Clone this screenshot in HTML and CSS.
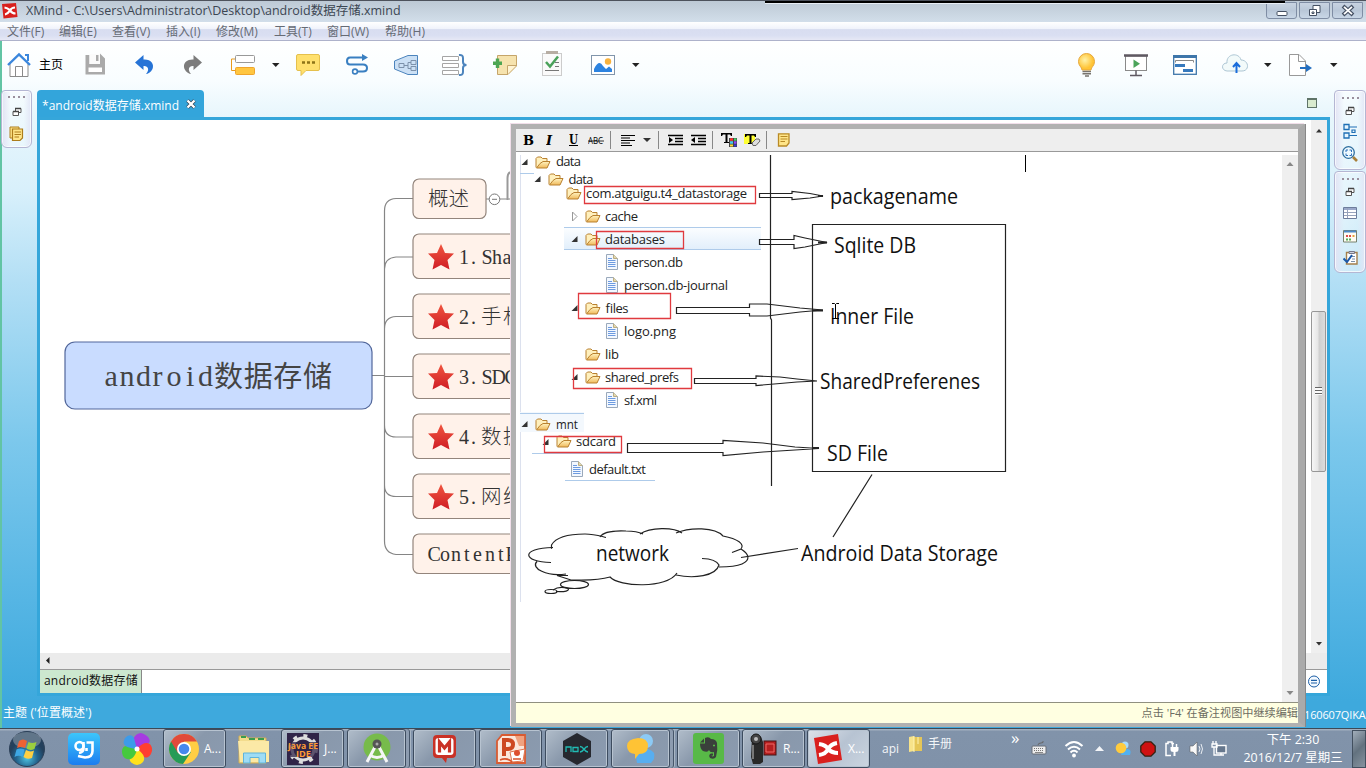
FILE: index.html
```html
<!DOCTYPE html>
<html lang="zh-CN">
<head>
<meta charset="utf-8">
<title>XMind</title>
<link rel="stylesheet" href="styles.css">
</head>
<body>
<svg class="defs" width="0" height="0">
  <defs>
    <linearGradient id="gStar" x1="0" y1="0" x2="0" y2="1"><stop offset="0" stop-color="#f0563f"/><stop offset="1" stop-color="#cf1d26"/></linearGradient>
    <linearGradient id="gFold" x1="0" y1="0" x2="0" y2="1"><stop offset="0" stop-color="#fff3c0"/><stop offset="1" stop-color="#f0b95a"/></linearGradient>
    <linearGradient id="gRow" x1="0" y1="0" x2="0" y2="1"><stop offset="0" stop-color="#fbfdff"/><stop offset="1" stop-color="#e2effb"/></linearGradient>
    <radialGradient id="gBulb" cx=".4" cy=".4"><stop offset="0" stop-color="#fff2a8"/><stop offset="1" stop-color="#ffc436"/></radialGradient>
    <radialGradient id="gOrb" cx=".5" cy=".75"><stop offset="0" stop-color="#4fc6e4"/><stop offset=".6" stop-color="#24658f"/><stop offset="1" stop-color="#23405c"/></radialGradient>
    <linearGradient id="gBlue" x1="0" y1="0" x2="0" y2="1"><stop offset="0" stop-color="#3cc6fb"/><stop offset="1" stop-color="#1c7df0"/></linearGradient>
    <symbol id="star" viewBox="-14 -14 28 28"><path d="M0-13 4-4 13-3.500 6.500 3 8.500 12.500 0 8-8.500 12.500-6.500 3-13-3.500-4-4Z" fill="url(#gStar)"/></symbol>
    <symbol id="folder" viewBox="0 0 16 13"><path d="M1 11.500V2.500L2.500 1H6L7.500 2.500H12V5" fill="#fff0bd" stroke="#b98130"/><path d="M1.500 12 5 7.500 8 5.500H15L12 12Z" fill="url(#gFold)" stroke="#b98130"/></symbol>
    <symbol id="doc" viewBox="0 0 12 16"><path d="M.5.5H7.500L11.500 4.500V15.500H.5Z" fill="#f3f8ff" stroke="#9aa9bb"/><path d="M7.500.5V4.500H11.500" fill="#e7d9a8" stroke="#b9ad86"/><path d="M2 4.500H6M2 6.500H9.500M2 8.500H9.500M2 10.500H9.500M2 12.500H9.500" stroke="#6d9be0"/></symbol>
    <symbol id="tri" viewBox="0 0 8 8"><path d="M6.500 1V7H.5Z" fill="#333"/></symbol>
    <symbol id="restore" viewBox="0 0 10 10"><path d="M3.500 4V1.500H9V5.500H6.500" fill="#fff" stroke="#555"/><path d="M1 4.500H6.500V8.500H1Z" fill="#fff" stroke="#555"/><path d="M3 1.500H9M1 4.500H7" stroke="#444" stroke-width="1.500"/></symbol>
    <symbol id="yellownote" viewBox="0 0 14 14"><path d="M1.500 .8H12V10L9.500 13H1.500Z" fill="#ffe588" stroke="#b98a26" stroke-width="1.300"/><path d="M3.500 3.500H10.500M3.500 6H10.500M3.500 8.500H8" stroke="#b98a26"/></symbol>
  </defs>
</svg>
<div class="desktop">
  <header class="titlebar">
    <svg class="app-icon" width="16" height="16" viewBox="0 0 16 16"><path d="M0 1 14 0 15.500 14 1.500 15.500Z" fill="#d8201d"/><path d="M2.500 4.500C6 5 7 6.500 8 7.500 9 5.500 11 4.500 13 4.500M3 11.500C6 11 7 9 8 7.500 9.500 9.500 11 10.500 13.500 10.500" fill="none" stroke="#fff" stroke-width="2.200"/></svg>
    <span class="title">XMind - C:\Users\Administrator\Desktop\android数据存储.xmind</span>
    <span class="topline"></span>
    <div class="winbtns">
      <span class="wb"><svg width="30" height="17"><rect x="10" y="9.500" width="10" height="4" rx="1" fill="#fff" stroke="#455063"/></svg></span>
      <span class="wb"><svg width="30" height="17"><path d="M13 3.500H20V10.500H13Z" fill="#fff" stroke="#455063"/><path d="M9.500 7.500H16.500V13.500H9.500Z" fill="#fff" stroke="#455063"/><path d="M12 10H14V11.500H12Z" fill="none" stroke="#455063"/></svg></span>
      <span class="wb"><svg width="30" height="17"><path d="M10 4 20 13M20 4 10 13" stroke="#455063" stroke-width="4"/><path d="M11 4.800 19 12.200M19 4.800 11 12.200" stroke="#fff" stroke-width="1.800"/></svg></span>
    </div>
  </header>
  <nav class="menubar"><span>文件(F)</span><span>编辑(E)</span><span>查看(V)</span><span>插入(I)</span><span>修改(M)</span><span>工具(T)</span><span>窗口(W)</span><span>帮助(H)</span></nav>
  <div class="window">
    <div class="toolbar">
      <svg width="26" height="28" viewBox="7 51 26 28"><path d="M10 64V76.500H28V64" fill="#fff" stroke="#8a8a8a"/><path d="M15.500 76V66.500H22.500V76" fill="#fff" stroke="#8a8a8a"/><path d="M8 65 19 54.500 30 65" fill="none" stroke="#3a86dc" stroke-width="2.400"/><path d="M25 55H28V61" fill="none" stroke="#3a86dc" stroke-width="2"/></svg>
      <span class="home">主页</span>
      <svg width="22" height="28" viewBox="85 51 22 28"><path d="M86.500 56H88.500V65H101V56L104 59V73.500H86.500Z" fill="#aaa" stroke="#aaa" stroke-width="2"/><path d="M89.500 54H100V64H89.500Z" fill="#fbfbfb"/><path d="M96 55H98.500V61H96Z" fill="#aaa"/><path d="M88.500 67.500H102V72H88.500Z" fill="#fff"/></svg>
      <svg width="22" height="28" viewBox="135 51 22 28"><path d="M135 62.500 143.500 55V59.500C151 59 154.500 64 152.500 69 151 72.500 147.500 74 146 74 150 69.500 148 65.500 143.500 66V70Z" fill="#2673d6"/></svg>
      <svg width="22" height="28" viewBox="183 51 22 28"><path d="M202 62.500 193.500 55V59.500C186 59 182.500 64 184.500 69 186 72.500 189.500 74 191 74 187 69.500 189 65.500 193.500 66V70Z" fill="#7c7c7c"/></svg>
      <svg width="26" height="28" viewBox="231 51 26 28"><path d="M235 59H231.500V70.500H235" fill="none" stroke="#e89b1e"/><rect x="235.500" y="55.500" width="19" height="7" rx="1" fill="#fff" stroke="#999"/><rect x="235.500" y="67.500" width="19" height="7" rx="1" fill="#ffc640" stroke="#efa52c"/></svg>
      <svg class="caret" width="8" height="28" viewBox="272 51 8 28"><path d="M272 63H279.500L275.750 67Z" fill="#222"/></svg>
      <svg width="26" height="28" viewBox="295 51 26 28"><path d="M298 54.500H318Q319.500 54.500 319.500 56V69Q319.500 70.500 318 70.500H306L301 75.500V70.500H298Q296.500 70.500 296.500 69V56Q296.500 54.500 298 54.500Z" fill="#ffe06e" stroke="#e5c04d"/><path d="M302 62.500h3m2 0h3m2 0h3" stroke="#8e7418" stroke-width="2.500"/></svg>
      <svg width="24" height="28" viewBox="346 51 24 28"><path d="M364 57.500H350Q347 57.500 347 61T350 64.500H363Q367 64.500 367 68T363 71.500H358" fill="none" stroke="#397fc1" stroke-width="2"/><path d="M362 54 368 57.500 362 61Z" fill="#397fc1"/><circle cx="355" cy="71.500" r="2.400" fill="#fff" stroke="#397fc1" stroke-width="1.600"/></svg>
      <svg width="26" height="28" viewBox="394 51 26 28"><path d="M394.500 61 408 55.500H417.500V74.500H408L394.500 69Z" fill="#cbe0f5" stroke="#4c84bd"/><path d="M399 63.500h5v4h-5zM411 60.500h5v4h-5zM411 66.500h5v4h-5zM404 65.500h4M411 62.500h-3v6h3" fill="none" stroke="#7c91aa"/></svg>
      <svg width="27" height="28" viewBox="442 51 27 28"><path d="M442.500 56.500h16v4h-16zM442.500 63.500h16v4h-16zM442.500 70.500h16v4h-16z" fill="#fff" stroke="#a5a5a5"/><path d="M459 55Q463 54.500 463 58V62Q463 65 466.500 65 463 65 463 68V72Q463 75.500 459 75" fill="none" stroke="#4c84bd" stroke-width="2"/></svg>
      <svg width="26" height="28" viewBox="493 51 26 28"><path d="M497.500 55.500H516.500V66L508 74.500H497.500Z" fill="#f6e3ae" stroke="#c5a56a"/><path d="M507.500 74V65.500H516" fill="#fff4d4" stroke="#c5a56a"/><path d="M497.500 58.500V68M493 63.300H502" stroke="#4ea653" stroke-width="3.400"/></svg>
      <svg width="24" height="28" viewBox="542 51 24 28"><rect x="542.500" y="53.500" width="19" height="22" fill="#fafafa" stroke="#ccc"/><path d="M546 52.500H558" stroke="#b7ada3" stroke-width="3"/><path d="M546 62 550 66.500 558 56.500" fill="none" stroke="#4aa15a" stroke-width="2.500"/><path d="M555 62.500H559M555 66.500H559M545 70.500H559" stroke="#777"/></svg>
      <svg width="26" height="28" viewBox="591 51 26 28"><rect x="591.500" y="55.500" width="23" height="19" fill="#fff" stroke="#8195ab"/><circle cx="608" cy="61.500" r="3.200" fill="#f8b23d"/><path d="M594 72V69Q599 59 603 66L606 69 609 66.500 612 69V72Z" fill="#2d83e0"/></svg>
      <svg class="caret" width="8" height="28" viewBox="272 51 8 28"><path d="M272 63H279.500L275.750 67Z" fill="#222"/></svg>
      <svg width="20" height="28" viewBox="1077 51 20 28"><path d="M1082 70C1082 67 1078.500 66 1078.500 61.500A8 8 0 0 1 1094.500 61.500C1094.500 66 1091 67 1091 70Z" fill="url(#gBulb)" stroke="#e6a73b"/><path d="M1082.500 71.500H1091M1082.500 73.800H1091M1085 76H1089" stroke="#77736d" stroke-width="1.600"/></svg>
      <svg width="25" height="28" viewBox="1124 51 25 28"><rect x="1125.500" y="56" width="21" height="14.500" fill="#fff" stroke="#8a8a8a"/><path d="M1124 55.500H1148" stroke="#5f5962" stroke-width="2.500"/><path d="M1133.500 59.500V68L1140 63.700Z" fill="#4ca45a"/><path d="M1136 70.500V75M1130 75.500H1142" stroke="#5f5962" stroke-width="1.500"/></svg>
      <svg width="25" height="28" viewBox="1173 51 25 28"><rect x="1173.700" y="55.700" width="22.600" height="18.600" fill="#fff" stroke="#3e76aa" stroke-width="1.300"/><path d="M1173 56.500H1197" stroke="#3e76aa" stroke-width="3"/><path d="M1175.500 62.500V60.500H1193.500V62.500" fill="none" stroke="#888"/><path d="M1175 65.500H1185M1183 70.500H1193" stroke="#3679bd" stroke-width="3"/></svg>
      <svg width="27" height="28" viewBox="1222 51 27 28"><path d="M1227 71C1221 70.500 1221 63 1227 63 1226 53.500 1239 52 1241 60 1249 60 1250 71 1242 71Z" fill="#f2fafa" stroke="#adc6d4"/><path d="M1236.500 73V64M1233 67 1236.500 63 1240 67" fill="none" stroke="#1b6ddb" stroke-width="2"/></svg>
      <svg class="caret" width="8" height="28" viewBox="272 51 8 28"><path d="M272 63H279.500L275.750 67Z" fill="#222"/></svg>
      <svg width="25" height="28" viewBox="1289 51 25 28"><path d="M1289.500 54.500H1299L1305.500 61V75.500H1289.500Z" fill="#fff" stroke="#999"/><path d="M1298.500 55V61.500H1305" fill="none" stroke="#999"/><path d="M1300 68H1308" stroke="#246fc0" stroke-width="2"/><path d="M1306 64 1312 68 1306 72Z" fill="#246fc0"/></svg>
      <svg class="caret" width="8" height="28" viewBox="272 51 8 28"><path d="M272 63H279.500L275.750 67Z" fill="#222"/></svg>
    </div>
    <div class="work">
      <aside class="trim-left">
        <div class="trim t1">
          <i class="dots"></i>
          <svg width="10" height="10"><use href="#restore"/></svg>
          <svg width="15" height="16" viewBox="0 0 15 16"><path d="M1 1H10V12H1Z" fill="#ffe588" stroke="#ad7d1c"/><path d="M3.500 3H13.500V12L11 14.500H3.500Z" fill="#ffe588" stroke="#ad7d1c" stroke-width="1.200"/><path d="M5.500 6H12M5.500 8.500H12M5.500 11H10" stroke="#ad7d1c"/></svg>
        </div>
      </aside>
      <section class="center">
        <div class="tabs">
          <div class="tab"><span>*android数据存储.xmind</span><svg width="10" height="10" viewBox="0 0 10 10"><path d="M1.500 1.500 8.500 8.500M8.500 1.500 1.500 8.500" stroke="#345" stroke-width="3.800"/><path d="M1.500 1.500 8.500 8.500M8.500 1.500 1.500 8.500" stroke="#fff" stroke-width="2.400"/></svg></div>
          <span class="maxi"></span>
        </div>
        <div class="editor">
          <div class="canvas-row">
            <svg class="map" width="1271" height="533" viewBox="40 120 1271 533">
              <g fill="none" stroke="#858585" stroke-width="1.200">
                <path d="M372 375.500H384.500M413 198.500H396Q384.500 199 384.500 211V541Q384.500 553 396 554.500H413M413 257H396Q384.500 258 384.500 269M413 316.500H396Q384.500 317 384.500 329M384.500 376.500H413M384.500 425Q384.500 437 396 437H413M384.500 485Q384.500 496.500 396 496.500H413M486 199H512"/>
              </g>
              <path d="M510 172Q507.500 174 507.500 178V200" fill="none" stroke="#999" stroke-width="2"/>
              <rect x="65" y="342" width="307" height="67" rx="10" fill="#c9dcff" stroke="#52679b" stroke-width="1.200"/>
              <g fill="#fff2ea" stroke="#93857c" stroke-width="1.200">
                <rect x="413" y="179" width="73" height="39.500" rx="6"/>
                <rect x="413" y="234" width="120" height="44.500" rx="6"/><rect x="413" y="294" width="120" height="44.500" rx="6"/><rect x="413" y="354" width="120" height="44.500" rx="6"/><rect x="413" y="414" width="120" height="44.500" rx="6"/><rect x="413" y="474" width="120" height="44.500" rx="6"/><rect x="413" y="534" width="120" height="39.500" rx="6"/>
              </g>
              <circle cx="494.500" cy="199.300" r="5.300" fill="#fff" stroke="#777"/><path d="M492 199.300H497" stroke="#777"/>
              <use href="#star" x="427" y="243" width="28" height="28"/><use href="#star" x="427" y="303" width="28" height="28"/><use href="#star" x="427" y="363" width="28" height="28"/><use href="#star" x="427" y="423" width="28" height="28"/><use href="#star" x="427" y="483" width="28" height="28"/>
              <g class="song root"><text x="104.500 119.500 136 152.500 166.500 186 198" y="386">android</text><text x="214" y="387" class="rootcn" textLength="118">数据存储</text></g>
              <g class="song">
                <text class="cn" x="428 448.500" y="206">概述</text>
                <text x="459 471 481.500 492 502.500" y="264">1.Sha</text>
                <text x="459 471" y="324">2.<tspan class="cn" x="481 503">手机</tspan></text>
                <text x="459 471 481.500 491.500 504.500" y="384">3.SDC</text>
                <text x="459 471" y="444">4.<tspan class="cn" x="481 503">数据</tspan></text>
                <text x="459 471" y="504">5.<tspan class="cn" x="481 503">网络</tspan></text>
                <text x="427.500 440 451 464 473 485 498 505.500" y="561">ContentP</text>
              </g>
            </svg>
            <div class="vscroll">
              <svg width="16" height="10"><path d="M5 7.500 8 4 11 7.500Z" fill="#333"/></svg>
              <div class="thumb"><i></i></div>
              <svg width="16" height="10"><path d="M5 3 8 6.500 11 3Z" fill="#333"/></svg>
            </div>
          </div>
          <div class="hscroll"><svg width="16" height="16"><path d="M9.500 4V11L6 7.500Z" fill="#222"/></svg></div>
          <div class="sheets"><span class="sheet">android数据存储</span><svg width="14" height="14" viewBox="0 0 14 14"><circle cx="7" cy="6.500" r="5.500" fill="#f3f9ff" stroke="#1d5fa6"/><path d="M4 5.300H10M4 8H10" stroke="#1d5fa6" stroke-width="1.200"/></svg></div>
          <div class="note">
            <div class="notebar">
              <svg width="12" height="16"><text class="bi b" x="0" y="13">B</text></svg>
              <svg width="12" height="16"><text class="bi i" x="0" y="13">I</text></svg>
              <svg width="12" height="18"><text class="bi u" x="0" y="12.500" textLength="9" lengthAdjust="spacingAndGlyphs">U</text><path d="M0 14.500H9" stroke="#000"/></svg>
              <svg width="17" height="16"><text class="abc" x="0" y="12" textLength="15" lengthAdjust="spacingAndGlyphs">ABC</text><path d="M0 9H16" stroke="#000" stroke-width=".8"/></svg>
              <i class="sep"></i>
              <svg width="16" height="14"><path d="M1 2.500H15M1 5H10M1 7.500H15M1 10H10M1 12.500H12" stroke="#000" stroke-width="1.200"/></svg>
              <svg width="9" height="14"><path d="M0 5H8L4 9Z" fill="#333"/></svg>
              <i class="sep"></i>
              <svg width="17" height="14"><path d="M0 2.500H15M7 5.500H15M7 8.500H15M0 11.500H15" stroke="#000" stroke-width="1.300"/><path d="M1 4V10L5 7Z"/></svg>
              <svg width="17" height="14"><path d="M1 2.500H16M8 5.500H16M8 8.500H16M1 11.500H16" stroke="#000" stroke-width="1.300"/><path d="M5 4V10L1 7Z"/></svg>
              <i class="sep"></i>
              <svg width="17" height="16"><path d="M0 1H11V4H10L9 2.500H6.500V10H8V11H3V10H4.500V2.500H2L1 4H0Z"/><path d="M8 6H16V15H8Z" fill="#444"/><path d="M9 7.500h3" stroke="#f33" stroke-width="2.500"/><path d="M13 7.500h2.500" stroke="#4c6" stroke-width="2.500"/><path d="M9 10.500h3" stroke="#4ce" stroke-width="2.500"/><path d="M13 10.500h2.500" stroke="#84f" stroke-width="2.500"/><path d="M9 13.500h3" stroke="#fd3" stroke-width="2"/><path d="M13 13.500h2.500" stroke="#33d" stroke-width="2"/></svg>
              <svg width="18" height="16"><path d="M0 2H11V12H0Z" fill="#ff3"/><path d="M1 2H12V5H11L10 3.500H7.500V11H9V12H4V11H5.500V3.500H3L2 5H1Z"/><path d="M8 11 12 7H15L16 9 12 13.500H9Z" fill="#ddd" stroke="#666"/></svg>
              <i class="sep"></i>
              <svg width="14" height="14"><use href="#yellownote"/></svg>
            </div>
            <div class="notebody">
              <svg class="pic" width="766" height="550" viewBox="516 152 766 550">
                <path d="M520.500 155V602" stroke="#dce1ee"/>
                <rect x="564" y="228" width="197" height="21" fill="url(#gRow)"/><rect x="520" y="412" width="64" height="20" fill="#f3f8fd"/>
                <path d="M520 173.500H534M564 227.500H761M564 249.500H761M520 413.500H584M532 453.500H622M565 480.500H655" stroke="#aecbea"/>
                <use href="#tri" x="521" y="158" width="8" height="8"/><use href="#tri" x="534" y="175" width="8" height="8"/><use href="#tri" x="571" y="235" width="8" height="8"/><use href="#tri" x="571" y="304" width="8" height="8"/><use href="#tri" x="571" y="373" width="8" height="8"/><use href="#tri" x="521" y="420" width="8" height="8"/><use href="#tri" x="542" y="438" width="8" height="8"/>
                <path d="M572.500 212V221L577 216.500Z" fill="#fff" stroke="#999"/>
                <use href="#folder" x="535" y="156" width="16" height="13"/><use href="#folder" x="548" y="173" width="16" height="13"/><use href="#folder" x="566" y="187" width="16" height="13"/><use href="#folder" x="585" y="210" width="16" height="13"/><use href="#folder" x="585" y="233" width="16" height="13"/><use href="#folder" x="585" y="302" width="16" height="13"/><use href="#folder" x="585" y="348" width="16" height="13"/><use href="#folder" x="585" y="371" width="16" height="13"/><use href="#folder" x="535" y="418" width="16" height="13"/><use href="#folder" x="556" y="435" width="16" height="13"/>
                <use href="#doc" x="606" y="254" width="12" height="16"/><use href="#doc" x="606" y="277" width="12" height="16"/><use href="#doc" x="606" y="323" width="12" height="16"/><use href="#doc" x="606" y="392" width="12" height="16"/><use href="#doc" x="571" y="461" width="12" height="16"/>
                <g class="tree">
                  <text x="556" y="166" textLength="25">data</text><text x="568.500" y="184" textLength="25">data</text>
                  <text x="586" y="198" textLength="161">com.atguigu.t4_datastorage</text>
                  <text x="605" y="220.500" textLength="33">cache</text><text x="605" y="244" textLength="60">databases</text>
                  <text x="624" y="266.500" textLength="59">person.db</text><text x="624" y="289.500" textLength="104">person.db-journal</text>
                  <text x="605" y="312.500" textLength="23">files</text><text x="624" y="335.500" textLength="52">logo.png</text><text x="605" y="358.500" textLength="14">lib</text>
                  <text x="605" y="381.500" textLength="74">shared_prefs</text><text x="624" y="404.500" textLength="33">sf.xml</text>
                  <text x="556" y="429" textLength="22" lengthAdjust="spacingAndGlyphs">mnt</text><text x="576" y="446" textLength="40">sdcard</text><text x="589" y="473.500" textLength="57">default.txt</text>
                </g>
                <g fill="none" stroke="#e03a3f" stroke-width="1.300"><path d="M584.500 186.500H755.500V203.500H584.500ZM596.500 231.500H683.500V248.500H596.500ZM578.500 293.500H670.500V318.500H578.500ZM573.500 368.500H691.500V388.500H573.500ZM544.500 436.500H621.500V452.500H544.500Z"/></g>
                <g fill="none" stroke="#222" stroke-width="1.200">
                  <path d="M770.500 155V318L771.500 320V486M812.500 224.500H1005.500V471.500H812.500ZM872 474.500 833 537M741 557.500 798 548.500"/>
                  <path d="M759.500 193.500H792V191.500L810 193.500 823 196 810 198 792 199.500V197.500H759.500Z"/>
                  <path d="M759.500 239.500H794V235.500L805 238 827 242.500 805 247 794 248.500V244.500H759.500Z"/>
                  <path d="M676.500 307.500H749.500V304L767 304 800 308 823 310 800 312 767 316 749.500 316V313.500H676.500Z"/>
                  <path d="M694.500 378.500H756V376L780 377 797 379 817 381 797 382 780 383.500 756 385.500V383.500H694.500Z"/>
                  <path d="M627.500 443.500H723V440.500L763 443 795 447 819 448.500 795 450 763 452 723 455.500V452.500H627.500Z"/>
                  <path d="M818 196H823M818 242.500H827M812 310.500H823M812 448H819" stroke-width="2"/>
                  <path d="M551.500 549V545C556 537 570 534 585 534 594 534 600 536 606 537.500M600 537C603 532 615 530.500 626 531 634 531 639 532 643 534M640 534C650 527 674 527 682 533M676 533C690 527 715 527 723 536 738 539 745 544 741 549L732 552.500M741 549C749 554 751 560 742 564 735 567 726 567 719 567M702 558.500Q716 559 719 565C716 576 694 579 676 575M677 573C667 589 619 587 610 577 597 581 586 580 571 580L557 575.500H568M566 574C547 577 530 568 537 561.500M551 562.500C522 562 520 548 553 547.500"/>
                  <ellipse cx="574.500" cy="584.500" rx="14" ry="4"/><path d="M568 588.500C560 586 556 588 553 590M556 591.500C565 592 570 591 568 588"/><ellipse cx="551" cy="591.500" rx="6" ry="2"/>
                </g>
                <g class="label">
                  <text x="830" y="204" textLength="128" lengthAdjust="spacingAndGlyphs">packagename</text><text x="834" y="253" textLength="82" lengthAdjust="spacingAndGlyphs">Sqlite DB</text><text x="830" y="324" textLength="84" lengthAdjust="spacingAndGlyphs">Inner File</text><text x="820" y="388.500" textLength="160" lengthAdjust="spacingAndGlyphs">SharedPreferenes</text><text x="827" y="461" textLength="61" lengthAdjust="spacingAndGlyphs">SD File</text><text x="801" y="561" textLength="197" lengthAdjust="spacingAndGlyphs">Android Data Storage</text><text x="596" y="561" textLength="73" lengthAdjust="spacingAndGlyphs">network</text>
                </g>
                <path d="M1025.500 155V172M832 303.500H834.500L835.500 304.500 836.500 303.500H839M835.500 304V318M832 318.500H839" stroke="#000" fill="none"/>
              </svg>
              <div class="nscroll"><svg width="16" height="18"><path d="M4.500 11 8 7 11.500 11Z" fill="#888"/></svg><svg width="16" height="18"><path d="M4.500 7 8 11 11.500 7Z" fill="#888"/></svg></div>
            </div>
            <div class="notefoot">点击 'F4' 在备注视图中继续编辑</div>
          </div>
        </div>
      </section>
      <aside class="trim-right">
        <div class="trim t2">
          <i class="dots"></i>
          <svg width="10" height="10"><use href="#restore"/></svg>
          <svg width="14" height="16" viewBox="0 0 14 16"><path d="M1 1.500H6V6.500H1ZM1 10H6V15H1Z" fill="#e6f6ff" stroke="#1f6fb5" stroke-width="1.300"/><path d="M6 4H14M6 12.500H14M9 7h3v2.500H9z" fill="none" stroke="#1f6fb5" stroke-width="1.200"/></svg>
          <svg width="16" height="16" viewBox="0 0 16 16"><circle cx="6.500" cy="6.500" r="5.800" fill="#eefaff" stroke="#2f6f9f" stroke-width="1.300"/><path d="M4 6V4H6M7.500 4H9.500V6M9.500 7.500V9.500H7.500M6 9.500H4V7.500" fill="none" stroke="#2a6fbb"/><path d="M11 11 15 15" stroke="#a8803a" stroke-width="2.600"/></svg>
        </div>
        <div class="trim t3">
          <i class="dots"></i>
          <svg width="10" height="10"><use href="#restore"/></svg>
          <svg class="list" width="14" height="12" viewBox="0 0 14 12"><path d="M.5.5H13.500V11.500H.5Z" fill="#fff" stroke="#6d7d9c"/><path d="M1 2H13" stroke="#9aa8ca" stroke-width="2"/><path d="M4.500 1V11M1 5.500H13M1 8.500H13" stroke="#97a3bc"/></svg>
          <svg class="markers" width="14" height="13" viewBox="0 0 14 13"><path d="M.5.5H13.500V12H.5Z" fill="#fffdf4" stroke="#77806d"/><path d="M1 1.500H13" stroke="#4d8bc9" stroke-width="2"/><path d="M3 6h2m1 0h2" stroke="#dd4b4b" stroke-width="2"/><path d="M9.500 6h2" stroke="#e8a23a" stroke-width="2"/><path d="M3 9.500h2m1 0h2" stroke="#55ad55" stroke-width="2"/></svg>
          <svg width="15" height="15" viewBox="0 0 15 15"><path d="M3.500 2.500H14V14H3.500Z" fill="#fff" stroke="#a57f4a" stroke-width="1.400"/><path d="M6 1.500H11.500V3.500H6Z" fill="#cfd3dc" stroke="#778"/><path d="M8 6.500H12M9 9H12M8 11.500H12" stroke="#7b8ea7"/><path d="M.5 8.500 4 12 9 5" fill="none" stroke="#1b58a8" stroke-width="2"/></svg>
        </div>
      </aside>
    </div>
    <footer class="status"><span>主题 ('位置概述')</span><span class="id">160607QIKA</span></footer>
  </div>
  <div class="taskbar">
    <svg width="38" height="38" viewBox="0 0 38 38"><circle cx="19" cy="19" r="17.500" fill="url(#gOrb)" stroke="#2c4058"/><ellipse cx="19" cy="10" rx="14" ry="8" fill="#fff" opacity=".28"/><path d="M11 11Q15 8 19 11L17 18Q13 16 9 18Z" fill="#ee6234"/><path d="M20.500 12Q24 14 28.500 12L26.500 19Q22 21 18.500 18.500Z" fill="#9bce3f"/><path d="M8.500 19.500Q12 17.500 16.500 19.500L14.500 27Q11 24.500 6.500 27Z" fill="#3ea7e4"/><path d="M18 20Q22 22.500 26 20.500L24 28Q19 30 15.500 27Z" fill="#ffd042"/></svg>
    <svg width="32" height="32" viewBox="0 0 32 32"><rect width="32" height="32" rx="5" fill="url(#gBlue)"/><circle cx="11.500" cy="13" r="4" fill="none" stroke="#fff" stroke-width="2.600"/><path d="M15.500 9V16Q15.500 19 11 20M18.500 9.500H24.500V18Q24.500 24.500 17 24.500L10 23M18.500 15V18" fill="none" stroke="#fff" stroke-width="2.600"/></svg>
    <svg width="34" height="34" viewBox="-17 -17 34 34"><path d="M0 0C-7-6-4-15 4-16 12-14 14-8 12-6Z" fill="#a63be2"/><path d="M0 0C8-10 16-6 15 2 13 9 9 9 7 8Z" fill="#ff3f31"/><path d="M0 0C11 7 8 15 0 16-9 14-8 9-6 7Z" fill="#ffe11c"/><path d="M0 0C-2 11-10 13-14 7-17 0-13-3-11-3Z" fill="#46c93e"/><path d="M0 0C-11-1-16-4-12-11-7-16-4-13-3-11Z" fill="#3d9be9"/><circle r="2.500" fill="#fff"/></svg>
    <div class="task"><svg width="30" height="30" viewBox="-15 -15 30 30"><circle r="15" fill="#ffce44"/><path d="M0 0-13-7.500A15 15 0 0 0-1 15L7 3Z" fill="#259b57"/><path d="M-13-7.500A15 15 0 0 1 13-7.500H0L-6 4Z" fill="#e14a3a"/><circle r="7" fill="#fff"/><circle r="5.300" fill="#4688ee"/></svg><span>A...</span></div>
    <svg class="plain" width="33" height="30" viewBox="238 734 33 30"><path d="M239 736H246L248 738H266V763H239Z" fill="#f3dc8c" stroke="#d0ad54"/><path d="M241 737h5m3 2h6m3 0h6" stroke="#3b9c4d" stroke-width="2"/><path d="M238 741H269V762H240Z" fill="#fbe9a6"/><path d="M243.500 763V753H265.500V763H259V757.500H250V763Z" fill="#9edcf5" stroke="#5fb4db"/></svg>
    <div class="task"><svg width="32" height="32" viewBox="0 0 32 32"><rect width="32" height="32" fill="#302448"/><circle cx="16" cy="16" r="11" fill="none" stroke="#ddd" stroke-width="3"/><circle cx="16" cy="16" r="13.500" fill="none" stroke="#ddd" stroke-width="3" stroke-dasharray="4 6.600"/><rect y="9" width="32" height="15" fill="#302448" opacity=".75"/><text class="jee" x="1" y="15.500" textLength="30" lengthAdjust="spacingAndGlyphs">Java EE</text><text class="jee" x="9" y="24" textLength="15" lengthAdjust="spacingAndGlyphs">IDE</text></svg><span>J...</span></div>
    <div class="task stacked mid"><svg width="28" height="32" viewBox="0 0 28 32"><circle cx="14" cy="14" r="13.500" fill="#77bb4b"/><path d="M12.500 13 4 29M15.500 13 24 29M7 22Q14 27 21 22" fill="none" stroke="#f6f6f6" stroke-width="3"/><circle cx="14" cy="11" r="4.500" fill="#555"/><circle cx="14" cy="11" r="1.500" fill="#aaa"/></svg></div>
    <div class="task mid"><svg width="27" height="30" viewBox="0 0 27 30"><path d="M6 1H21Q25 1 25 5V20Q25 24 21 24H16L15 29 11 24H6Q2 24 2 20V5Q2 1 6 1Z" fill="#c93126"/><rect x="4.500" y="4" width="18" height="17" rx="3" fill="#fff"/><path d="M8.500 18.500V8L13.500 14 18.500 8V18.500" fill="none" stroke="#c93126" stroke-width="3.200"/></svg></div>
    <div class="task mid"><svg width="32" height="30" viewBox="0 0 32 30"><path d="M7 1H30V29H2V7Z" fill="#fbe6da" stroke="#d85b32" stroke-width="1.800"/><path d="M20 2H29V12H24Z" fill="#f0a27f"/><path d="M9 22V6H13Q18 6 18 10.500T13 15H9" fill="none" stroke="#cd4821" stroke-width="4"/><path d="M15 18 30 15 28 27 17 28Z" fill="#fff" stroke="#df7651"/><circle cx="22" cy="19" r="3" fill="#dd5030"/><path d="M5 26Q12 23 17 28M18 25H26" fill="none" stroke="#d8532c" stroke-width="1.500"/></svg></div>
    <div class="task mid"><svg width="30" height="34" viewBox="0 0 30 34"><path d="M15 1 29 9V25L15 33 1 25V9Z" fill="#26282f"/><path d="M4 20V15H9V20M11 15.500H16V19.500H11ZM18 14.500C22 14.500 22 20 26 20M26 14.500C22 14.500 22 20 18 20" fill="none" stroke="#21bab3" stroke-width="1.300"/></svg></div>
    <div class="task stacked mid"><svg width="32" height="32" viewBox="0 0 32 32"><circle cx="21" cy="8" r="7" fill="#8ccaf5"/><path d="M11 24Q14 14 23 16 31 18 29 26L26 30H12Z" fill="#58aef0"/><path d="M13 5Q23 5 23 13 23 21 14 21L10 26V21Q2 20 2 13T13 5Z" fill="#fec335"/></svg></div>
    <div class="task mid"><svg width="31" height="31" viewBox="0 0 31 31"><rect width="31" height="31" rx="3" fill="#58b947"/><path d="M12 5Q16 3 18 6 23 6 24 10 25 17 23 24 21 27 17 25 15 22 18 20.500H20V22.500H18.500Q19 24 21 23L21 19Q17 20 16 17 15 20 10 18 7 16 7 10.500H12Z" fill="#3a403b"/><path d="M11 5.500V9.500H7Z" fill="#3a403b"/><path d="M20 12.500h2" stroke="#58b947" stroke-width="1.500"/></svg></div>
    <div class="task"><svg width="30" height="32" viewBox="0 0 30 32"><path d="M4 4H13L15 9V29L12 31H5L3 24Z" fill="#292929"/><circle cx="8" cy="6" r="5" fill="#444" stroke="#171717"/><circle cx="8" cy="6" r="2" fill="#bbb"/><rect x="16" y="8" width="12" height="14" fill="#b51f20" stroke="#471414"/><path d="M18 11H26V19H18Z" fill="none" stroke="#ef6965"/><path d="M5 12V26" stroke="#777" stroke-width="2"/></svg><span>R...</span></div>
    <div class="task active"><svg width="30" height="30" viewBox="0 0 30 30"><path d="M1 4 25 0 29 26 5 30Z" fill="#d9201e"/><path d="M6 10Q13 11 15 15 18 10 24 9M6 21Q13 20 15 15 19 19 25 19" fill="none" stroke="#fff" stroke-width="4"/></svg><span>X...</span></div>
    <span class="tb-text api">api</span>
    <span class="tb-text book"><svg width="14" height="16"><path d="M0 1 5 0V15L0 16Z" fill="#f7e38a"/><path d="M5 1H13V15H5Z" fill="#e5c657"/><path d="M5 0V16M9 1V8" stroke="#fff4b5"/></svg>手册</span>
    <span class="more">»</span>
    <svg width="16" height="16" viewBox="0 0 16 16"><path d="M7 4Q7 2 10 2T12 0" fill="none" stroke="#666"/><rect x="1" y="5" width="14" height="8" rx="1" fill="#eee" stroke="#676d76"/><path d="M3 7.500H13M3 9.500H13" stroke="#777" stroke-dasharray="1 1"/><path d="M4 11.500H12" stroke="#888"/></svg>
    <svg width="20" height="18" viewBox="0 0 20 18"><path d="M1.500 6Q10-2 18.500 6M4 9.500Q10 4 16 9.500M6.500 12.500Q10 9 13.500 12.500" fill="none" stroke="#fff" stroke-width="2"/><circle cx="10" cy="15.500" r="1.900" fill="#fff"/></svg>
    <svg width="9" height="6"><path d="M0 5 4.500 0 9 5Z" fill="#f3f5f8"/></svg>
    <svg width="16" height="16" viewBox="0 0 16 16"><circle cx="10" cy="4" r="3.500" fill="#a7dafb"/><path d="M6 14Q7 8 12 8T15 14Z" fill="#51b1f1"/><circle cx="6" cy="7" r="5.300" fill="#ffcb3d"/></svg>
    <svg width="16" height="16" viewBox="0 0 16 16"><path d="M5 .8H11L15.200 5V11L11 15.200H5L.8 11V5Z" fill="#cf1111" stroke="#321" stroke-width="1.300"/></svg>
    <svg width="16" height="16" viewBox="0 0 16 16"><path d="M7 14.500H2V2.500H4V1H8V2.500H10" fill="none" stroke="#fff" stroke-width="1.500"/><path d="M8.500 3V6M12.500 3V6" stroke="#fff" stroke-width="1.500"/><path d="M6.500 6H14.500V8.500Q14.500 11 11.500 11V15H9.500V11Q6.500 11 6.500 8.500Z" fill="#fff"/></svg>
    <svg width="16" height="16" viewBox="0 0 16 16"><path d="M1 5H4L8 1V15L4 11H1Z" fill="#f8f8f8" stroke="#555" stroke-width=".5"/><path d="M10 5Q12 8 10 11M12 3Q15 8 12 13" fill="none" stroke="#e9edf2"/></svg>
    <svg width="16" height="16" viewBox="0 0 16 16"><rect x="5.500" y="4.500" width="9.500" height="7.500" fill="#66778d" stroke="#fff" stroke-width="1.400"/><path d="M2 0V3M5 0V3M1 3H6V6H1ZM3 6V14H13M10 12V14" fill="none" stroke="#fff" stroke-width="1.300"/></svg>
    <div class="clock"><span>下午 2:30</span><span>2016/12/7 星期三</span></div>
    <div class="showdesk"></div>
  </div>
</div>
</body>
</html>
```
FILE: styles.css
```css
* { box-sizing: border-box; }
body { margin: 0; font: 12px/16px "Open Sans", "Noto Sans CJK SC", sans-serif; color: #111; overflow: hidden; }
svg { display: block; flex: none; }
.defs { position: absolute; }
.desktop { width: 1366px; height: 768px; display: flex; flex-direction: column; overflow: hidden; }
span { white-space: nowrap; }

.titlebar { position: relative; height: 22px; flex: none; display: flex; align-items: center; padding: 1px 3px 0 2px; border-top: 1px solid #4d525c; background: linear-gradient(#bdc9d5, #d2deea); }
.titlebar .title { margin-left: 8px; margin-top: -2px; font-size: 12.500px; color: #3c4652; }
.app-icon { margin-top: -2px; }
.topline { position: absolute; left: 765px; top: 0; width: 520px; height: 3px; background: #000; border-bottom: 1px solid #e8eef5; }
.winbtns { display: flex; gap: 2px; margin-left: auto; align-self: flex-start; }
.wb { width: 31px; height: 17px; border: 1px solid #7f8da4; border-radius: 0 0 3px 3px; background: linear-gradient(#c8d3e1, #b9c7d8 50%, #c8d6e6); }
.wb svg { margin-top: -1px; }

.menubar { height: 19px; flex: none; display: grid; grid-template-columns: 52px 53px 54px 50px 58px 53px 58px 60px; align-items: center; padding: 2px 0 0 7px; border-bottom: 1px solid #aeb2cb; background: linear-gradient(#fff 0, #f0f3fb 38%, #d8ddf0 42%, #dadff2 75%, #e6e8f5); color: #666b75; }

.window { flex: 1; min-height: 0; display: flex; flex-direction: column; border-left: 2px solid #62c4a4; background: linear-gradient(#fff 0, #f8fdff 40px, #e7f6fc 76px, #d8f0fb 150px, #b3dff5 240px, #7cc8ec 400px, #55b5e4 560px, #3ea9dd 660px); }
.toolbar { height: 49px; flex: none; display: grid; align-items: center; padding: 0 0 1px 5px;
  grid-template-columns: 32px 46px 50px 48px 48px 41px 23px 51px 48px 48px 51px 49px 49px 41px 445px 47px 49px 49px 42px 25px 41px 30px; }
.home { color: #000; }

.work { flex: none; height: 606px; display: flex; }
.trim-left { width: 35px; flex: none; }
.trim-right { width: 36px; flex: none; padding-left: 4px; display: flex; flex-direction: column; gap: 1px; }
.trim { display: flex; flex-direction: column; align-items: center; border: 1px solid #b4b6d3; border-radius: 4px 4px 6px 6px; background: linear-gradient(90deg, #e2e3f4, rgba(255, 255, 255, .35) 30%, rgba(255, 255, 255, .25) 75%, #e2e6f6); box-shadow: inset 0 0 0 1px rgba(255, 255, 255, .7); }
.t1 { width: 31px; height: 58px; margin-left: -1px; gap: 9px; padding-top: 5px; }
.t2 { width: 32px; height: 80px; gap: 7px; padding-top: 6px; }
.t3 { width: 32px; height: 102px; gap: 7px; padding-top: 6px; }
.t3 .list { margin-top: 3px; }
.t3 .markers { margin-top: 4px; }
.dots { width: 17px; height: 2px; background: repeating-linear-gradient(90deg, #9a8f9d 0 2px, transparent 2px 5px); }

.center { width: 1293px; flex: none; display: flex; flex-direction: column; }
.tabs { height: 27px; flex: none; display: flex; justify-content: space-between; align-items: stretch; }
.tab { width: 167px; display: flex; align-items: center; gap: 8px; padding: 4px 0 0 5px; background: #33a5db; border-radius: 4px 4px 0 0; color: #fff; font-size: 12px; }
.tab svg { margin-top: -3px; }
.tab span { width: 136px; letter-spacing: .02px; }
.maxi { width: 10px; height: 10px; margin: 8px 13px 0 0; border: 1px solid #5f7468; border-top-width: 2px; background: #d9ebcf; }
.editor { position: relative; height: 579px; border: 3px solid #35a6da; background: #fff; display: flex; flex-direction: column; }
.canvas-row { height: 533px; flex: none; display: flex; }
.map { background: #fff; }
.vscroll { width: 16px; display: flex; flex-direction: column; justify-content: space-between; padding: 5px 0 4px; background: #efefef; }
.thumb { width: 15px; height: 161px; margin-top: 8px; display: grid; place-items: center; border: 1px solid #979797; border-radius: 2px; background: linear-gradient(90deg, #f6f6f6, #e6e6e6 45%, #cfcfcf 55%, #dcdcdc); }
.thumb i { width: 7px; height: 8px; background: repeating-linear-gradient(#666 0 1px, #fafafa 1px 3px); }
.hscroll { height: 16px; flex: none; background: #ebebeb; }
.sheets { height: 24px; flex: none; display: flex; align-items: center; justify-content: space-between; padding-right: 6px; border-top: 1px solid #999; }
.sheet { width: 102px; height: 23px; line-height: 22px; padding-left: 4px; background: #cce8cf; border-right: 1px solid #888; margin-top: -1px; letter-spacing: .18px; }

.song { font-family: "Liberation Serif", "Noto Sans CJK SC", serif; font-size: 20px; font-weight: 300; fill: #333; }
.song .cn { font-size: 20.500px; }
.root { font-size: 30px; fill: #444; }
.rootcn { font-size: 29px; font-weight: 400; }

/* floating note editor over the map */
.note { position: absolute; left: 471px; top: 4px; width: 794px; height: 603px; z-index: 2; display: flex; flex-direction: column; border: 5px solid #b1b1b1; border-right: 7px solid #aaa; border-bottom-width: 6px; box-shadow: -1px -1px 0 #f1dfea, 1px 0 0 #888; background: #fff; }
.notebar { height: 23px; flex: none; display: grid; align-items: center; padding-left: 7px; background: #eee; border-bottom: 1px solid #999;
  grid-template-columns: 23px 23px 19px 22px 10px 23px 15px 10px 22px 22px 9px 23px 22px 11px 20px; }
.sep { width: 1px; height: 18px; background: #888; }
.bi { font: bold 13px "DejaVu Serif", serif; }
.bi.i { font-style: italic; }
.bi.u { font-size: 12px; }
.abc { font: 8.500px "Open Sans", sans-serif; }
.notebody { height: 550px; flex: none; display: flex; }
.nscroll { width: 16px; margin-top: 3px; display: flex; flex-direction: column; justify-content: space-between; background: #efefef; }
.notefoot { flex: 1; border-top: 1px solid #909080; background: #ffffe1; color: #6d6d61; text-align: right; line-height: 20px; font-size: 11.150px; white-space: nowrap; }
.tree { font: 13px "Open Sans", sans-serif; fill: #222; }
.label { font: 22px "Open Sans", sans-serif; fill: #111; }

.status { flex: 1; display: flex; justify-content: space-between; align-items: center; padding: 2px 0 0 1px; color: #fff; letter-spacing: .1px; }
.status .id { width: 62px; font-size: 11px; padding-top: 4px; letter-spacing: -.15px; }

.taskbar { height: 40px; flex: none; display: grid; align-items: center; padding: 0 0 0 8px; border-top: 1px solid #3d4956; background: linear-gradient(#a2afbf 0 1px, #8193aa 2px, #8092a9);
  grid-template-columns: 60px 52px 43px 75px 43px 66px 66px 66px 66px 66px 66px 65px 65px 75px 27px 102px 20px 33px 31px 20px 25px 24px 25px 22px 27px 114px 14px; }
.task { position: relative; width: 63px; height: 39px; display: flex; align-items: center; gap: 5px; padding-left: 5px; border: 1px solid #3d4c5f; border-radius: 3px; box-shadow: inset 0 0 0 1px #b7c3d0; background: linear-gradient(135deg, #b1bdca, #8998ab 45%, #8b9bb0); color: #fff; }
.task.mid { justify-content: center; padding: 0; }
.task.stacked { width: 59px; box-shadow: inset 0 0 0 1px #b7c3d0, 3px 0 0 #8d9cb0, 4px 0 0 #46566a, 5px 0 0 #a9b6c4; }
.task.active { background: linear-gradient(135deg, #dde3ea, #b7c3d2 50%, #cbd5e0); }
.jee { font: bold 8.500px "Open Sans", sans-serif; fill: #ff9b35; }
.tb-text { color: #f2f5f8; font-size: 12px; }
.book { display: flex; gap: 5px; margin-top: -10px; }
.more { color: #fff; font-size: 17px; margin-top: -22px; }
.clock { display: flex; flex-direction: column; align-items: center; color: #fff; width: 98px; font-size: 12.400px; line-height: 18px; margin-left: 6px; }
.showdesk { width: 14px; height: 38px; border: 1px solid #42505f; background: linear-gradient(135deg, #a1aeba, #63727f 50%, #86939f); }
```
